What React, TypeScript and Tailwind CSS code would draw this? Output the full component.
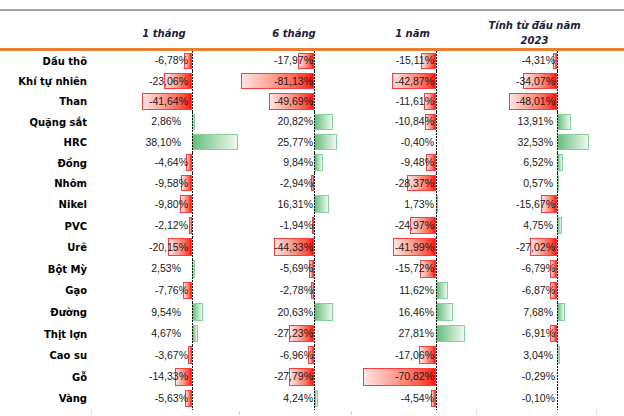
const ROWS: [string, number[]][] = [
  ['Dầu thô', [-6.78, -17.97, -15.11, -4.31]],
  ['Khí tự nhiên', [-23.06, -81.13, -42.87, -34.07]],
  ['Than', [-41.64, -49.69, -11.61, -48.01]],
  ['Quặng sắt', [2.86, 20.82, -10.84, 13.91]],
  ['HRC', [38.1, 25.77, -0.4, 32.53]],
  ['Đồng', [-4.64, 9.84, -9.48, 6.52]],
  ['Nhôm', [-9.58, -2.94, -28.37, 0.57]],
  ['Nikel', [-9.8, 16.31, 1.73, -15.67]],
  ['PVC', [-2.12, -1.94, -24.97, 4.75]],
  ['Urê', [-20.15, -44.33, -41.99, -27.02]],
  ['Bột Mỳ', [2.53, -5.69, -15.72, -6.79]],
  ['Gạo', [-7.76, -2.78, 11.62, -6.87]],
  ['Đường', [9.54, 20.63, 16.46, 7.68]],
  ['Thịt lợn', [4.67, -27.23, 27.81, -6.91]],
  ['Cao su', [-3.67, -6.96, -17.06, 3.04]],
  ['Gỗ', [-14.33, -27.79, -70.82, -0.29]],
  ['Vàng', [-5.63, 4.24, -4.54, -0.1]],
];

// k = px per 1%, neg/pos = right padding of the value before the axis
const COLS = [
  { title: ['1 tháng'], k: 1.2, neg: 'pr-[4px]', pos: 'pr-[11px]', head: 'pl-[22px]' },
  { title: ['6 tháng'], k: 0.905, neg: 'pr-[1px]', pos: 'pr-[1px]', head: 'pl-[38px]' },
  { title: ['1 năm'], k: 1.025, neg: 'pr-[2px]', pos: 'pr-[2px]', head: 'pl-[32px]' },
  { title: ['Tính từ đầu năm', '2023'], k: 0.99, neg: 'pr-[2px]', pos: 'pr-[4px]', head: 'pl-[34px]' },
];

const GRID = 'grid grid-cols-[92px_122px_122px_121px_121px]';

function fmt(v: number) {
  return v.toFixed(2).replace('.', ',') + '%';
}

function Cell({ v, col }: { v: number; col: (typeof COLS)[number] }) {
  const w = Math.round(Math.abs(v) * col.k);
  return (
    <div className="relative h-full">
      {/* bars hang off the axis */}
      <div className="absolute left-[100px] top-0 bottom-0 w-0">
        {w >= 1 && (
          <div
            className={
              v < 0
                ? 'absolute right-0 top-[1.5px] bottom-[2.5px] border border-[#ff3b3b] bg-linear-to-l from-[#ff0000] to-[#ffe4e4]'
                : 'absolute left-0 top-[1.5px] bottom-[2.5px] border border-[#86d29b] bg-linear-to-r from-[#63be7b] to-[#eef8f1]'
            }
            style={{ width: w }}
          />
        )}
      </div>
      <div
        className={`relative w-[100px] h-full flex items-center justify-end text-[10.5px] text-[#1a1a1a] whitespace-nowrap ${
          v < 0 ? col.neg : col.pos
        }`}
        style={{ fontFamily: '"Liberation Sans", Arial, sans-serif' }}
      >
        {fmt(v)}
      </div>
      <div className="absolute left-[100px] top-0 bottom-0 w-px bg-[repeating-linear-gradient(to_bottom,#111_0_2px,transparent_2px_3px)]" />
    </div>
  );
}

export default function App() {
  return (
    <div
      className="w-[624px] h-[416px] bg-white overflow-hidden"
      style={{ fontFamily: '"DejaVu Sans", Verdana, sans-serif' }}
    >
      <div className="h-[9px]" />
      <div className="h-[2px] bg-[#a3a3a3]" />

      <div className={`${GRID} h-[37px] pt-[7px]`}>
        <div />
        {COLS.map((c, i) => (
          <div
            key={i}
            className={`min-w-0 flex flex-col items-center justify-center text-center text-[10px] leading-[15px] font-bold italic text-[#1c1d3a] whitespace-nowrap ${c.head}`}
          >
            {c.title.map((t) => (
              <span key={t}>{t}</span>
            ))}
          </div>
        ))}
      </div>
      <div className="h-[3px] bg-[#ed7d31]" />

      {ROWS.map(([name, vals], r) => (
        <div key={name} className={`${GRID} ${r < 7 ? 'h-[20.4px]' : 'h-[21.6px]'}`}>
          <div className="flex items-center justify-end pr-[5px] text-[10px] font-bold text-black whitespace-nowrap">
            {name}
          </div>
          {vals.map((v, i) => (
            <Cell key={i} v={v} col={COLS[i]} />
          ))}
        </div>
      ))}

      {/* leftover gridline stubs under the table */}
      <div className="flex h-[4px] mt-[1px]">
        <div className="ml-[91px] w-px bg-[#d4d4d4]" />
        <div className="ml-[147px] w-px bg-[#d4d4d4]" />
        <div className="ml-[111px] w-px bg-[#d4d4d4]" />
        <div className="ml-[124px] w-px bg-[#d4d4d4]" />
        <div className="ml-[119px] w-px bg-[#d4d4d4]" />
      </div>
    </div>
  );
}
